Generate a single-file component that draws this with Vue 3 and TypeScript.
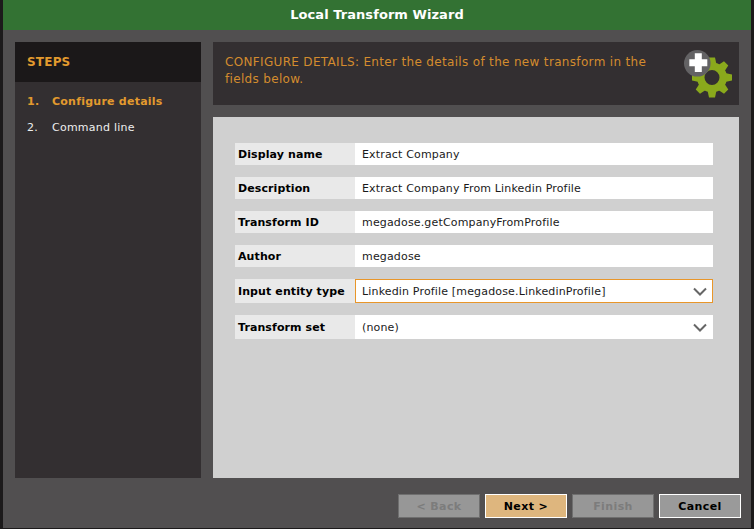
<script setup lang="ts">
interface Field { label: string; value: string; select?: boolean; focused?: boolean }
const fields: Field[] = [
  { label: 'Display name', value: 'Extract Company' },
  { label: 'Description', value: 'Extract Company From Linkedin Profile' },
  { label: 'Transform ID', value: 'megadose.getCompanyFromProfile' },
  { label: 'Author', value: 'megadose' },
  { label: 'Input entity type', value: 'Linkedin Profile [megadose.LinkedinProfile]', select: true, focused: true },
  { label: 'Transform set', value: '(none)', select: true },
]
const gearTeeth = [0, 45, 90, 135, 180, 225, 270, 315]
</script>

<template>
  <div class="window">
    <div class="title">Local Transform Wizard</div>
    <div class="body">
      <aside class="sidebar">
        <div class="steps-head">STEPS</div>
        <ol class="steps">
          <li class="step active"><span class="num">1.</span><span>Configure details</span></li>
          <li class="step"><span class="num">2.</span><span>Command line</span></li>
        </ol>
      </aside>
      <main class="main">
        <div class="banner">
          <p>CONFIGURE DETAILS: Enter the details of the new transform in the fields below.</p>
          <svg class="icon" width="64" height="50" viewBox="0 0 64 50">
            <g transform="translate(33 29.500)" fill="#8aa91c">
              <path v-for="a in gearTeeth" :key="a" d="M-4.500-13L-3-20H3L4.500-13Z" :transform="`rotate(${a})`" />
              <path fill-rule="evenodd" d="M0-15A15 15 0 1 1 0 15A15 15 0 1 1 0-15ZM0-7.500A7.500 7.500 0 1 0 0 7.500A7.500 7.500 0 1 0 0-7.500Z" />
            </g>
            <circle cx="18.300" cy="15.300" r="13.300" fill="#636264" />
            <path d="M15.800 5.300h7v5.900h5.500v7h-5.500v5.800h-7v-5.800h-5.500v-7h5.500z" fill="#fff" />
          </svg>
        </div>
        <div class="panel">
          <div v-for="f in fields" :key="f.label" class="row" :class="{ tall: f.select }">
            <div class="label">{{ f.label }}</div>
            <div class="value" :class="{ focused: f.focused }">
              <span>{{ f.value }}</span>
              <svg v-if="f.select" class="chev" width="14" height="9" viewBox="0 0 14 9">
                <path d="M1 1.500l6 6 6-6" fill="none" stroke="#666" stroke-width="2" />
              </svg>
            </div>
          </div>
        </div>
      </main>
    </div>
    <div class="footer">
      <button class="btn disabled">&lt; Back</button>
      <button class="btn next">Next &gt;</button>
      <button class="btn disabled">Finish</button>
      <button class="btn cancel">Cancel</button>
    </div>
  </div>
</template>

<style>
html, body { margin: 0; background: #1c1a1b; }
</style>

<style scoped>
.window {
  box-sizing: border-box;
  width: 748px;
  height: 528px;
  margin-left: 3px;
  background: #514f50;
  display: flex;
  flex-direction: column;
  font-family: "DejaVu Sans", sans-serif;
  font-size: 11px;
}
.title {
  height: 30px;
  background: #337233;
  color: #fff;
  font-weight: 700;
  font-size: 13px;
  line-height: 29px;
  text-align: center;
  letter-spacing: 0.06px;
}
.body {
  display: flex;
  gap: 12px;
  padding: 12px 12px 0;
  height: 448px;
  box-sizing: border-box;
}
.sidebar {
  width: 186px;
  flex: none;
  background: #332f31;
}
.steps-head {
  height: 40px;
  background: #1b1819;
  color: #e29a2e;
  font-weight: 700;
  font-size: 12px;
  line-height: 41px;
  padding-left: 12px;
  letter-spacing: 0.2px;
}
.steps {
  list-style: none;
  margin: 0;
  padding: 13px 0 0 12px;
  color: #eee;
  letter-spacing: 0.24px;
}
.step {
  display: flex;
  height: 26px;
  line-height: 14px;
}
.step.active {
  color: #e29a2e;
  font-weight: 700;
}
.num { width: 25px; }
.main {
  flex: 1;
  min-width: 0;
  display: flex;
  flex-direction: column;
  gap: 12px;
}
.banner {
  height: 63px;
  flex: none;
  background: #332f31;
  color: #d48c2e;
  font-size: 12px;
  line-height: 17px;
  letter-spacing: 0.33px;
  display: flex;
  position: relative;
  box-sizing: border-box;
  padding: 12px 12px;
}
.banner p {
  margin: 0;
  width: 432px;
}
.icon {
  position: absolute;
  right: -4px;
  top: 6px;
}
.panel {
  flex: 1;
  background: #d0d0d0;
  padding: 26px 26px 0 22px;
  display: flex;
  flex-direction: column;
  gap: 12px;
}
.row {
  display: flex;
  height: 22px;
}
.row.tall { height: 24px; }
.label {
  width: 120px;
  flex: none;
  background: #e9e9e9;
  color: #000;
  font-weight: 700;
  padding-left: 3px;
  box-sizing: border-box;
  display: flex;
  align-items: center;
  letter-spacing: 0.1px;
}
.value {
  flex: 1;
  background: #fff;
  color: #1a1a1a;
  display: flex;
  align-items: center;
  justify-content: space-between;
  padding: 0 6px 0 7px;
  box-sizing: border-box;
  letter-spacing: 0.16px;
}
.value.focused {
  border: 1px solid #e8962a;
  padding: 0 5px 0 6px;
}
.footer {
  display: flex;
  justify-content: flex-end;
  gap: 5px;
  padding: 16px 10px 0 0;
}
.btn {
  width: 82px;
  height: 24px;
  box-sizing: border-box;
  padding: 0;
  font-family: "DejaVu Sans", sans-serif;
  font-size: 11px;
  font-weight: 700;
  letter-spacing: 0.4px;
  color: #000;
  background: #9a9a9a;
  border: 1px solid #fff;
}
.btn.disabled {
  color: #7c7c7c;
  border-color: #6f6f6f;
  background: #979797;
}
.btn.next { background: #deb67e; }
</style>
